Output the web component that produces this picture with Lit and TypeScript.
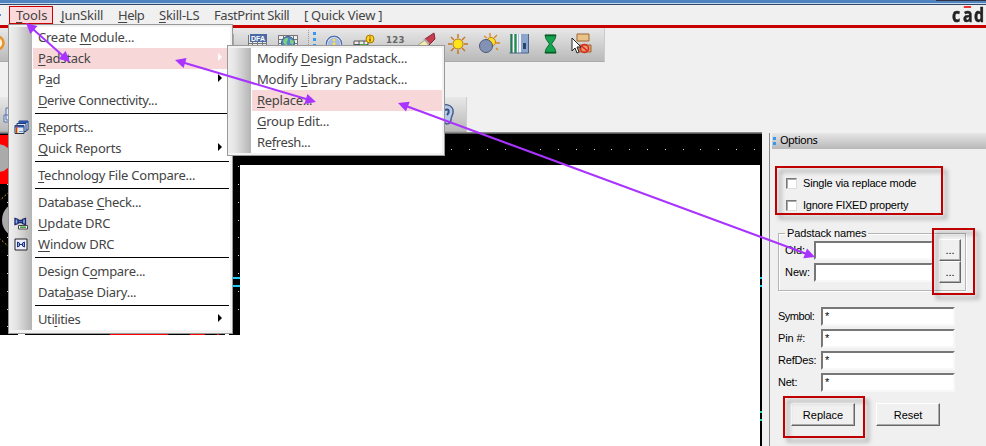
import { LitElement, html, css, svg, nothing } from "lit";
import { customElement, property } from "lit/decorators.js";

type Entry = { t: string; w: number; icon?: string; sub?: boolean; on?: boolean } | null;

// "&" precedes the mnemonic letter.
const label = (t: string) => {
  const i = t.indexOf("&");
  return i < 0 ? t : html`${t.slice(0, i)}<u>${t[i + 1]}</u>${t.slice(i + 2)}`;
};

const toolsMenu: Entry[] = [
  { t: "Create &Module...", w: 96 },
  { t: "&Padstack", w: 52, sub: true, on: true },
  { t: "P&ad", w: 22, sub: true },
  { t: "&Derive Connectivity...", w: 119 },
  null,
  { t: "&Reports...", w: 55, icon: "reports" },
  { t: "&Quick Reports", w: 83, sub: true },
  null,
  { t: "&Technology File Compare...", w: 157 },
  null,
  { t: "Database &Check...", w: 103 },
  { t: "&Update DRC", w: 72, icon: "update" },
  { t: "&Window DRC", w: 76, icon: "window" },
  null,
  { t: "Design C&ompare...", w: 107 },
  { t: "Data&base Diary...", w: 98 },
  null,
  { t: "Uti&lities", w: 42, sub: true },
];
const padMenu: Entry[] = [
  { t: "Modify &Design Padstack...", w: 150 },
  { t: "Modify &Library Padstack...", w: 150 },
  { t: "&Replace...", w: 55, on: true },
  { t: "&Group Edit...", w: 72 },
  { t: "Re&fresh...", w: 53 },
];

// Text run spaced to a fixed width.
@customElement("fit-text")
export class FitText extends LitElement {
  @property() t = "";
  @property({ type: Number }) w = 0;
  static styles = css`
    :host { display: inline-block; white-space: nowrap; }
    u { text-decoration: underline; text-decoration-thickness: 1px; text-underline-offset: 2px; text-decoration-skip-ink: none; }
  `;
  render() {
    return html`<span>${label(this.t)}</span>`;
  }
  updated() {
    const s = this.renderRoot.querySelector("span") as HTMLElement;
    s.style.letterSpacing = "0px";
    const n = this.t.replace("&", "").length;
    s.style.letterSpacing = (this.w + 0.3 - s.getBoundingClientRect().width) / n + "px";
  }
}

const menuIcons: Record<string, unknown> = {
  reports: svg`<path d="M5 1h9v9h-9z" fill="#dcecff" stroke="#223a78"/><path d="M5 2h9" stroke="#2b55b0" stroke-width="2"/><path d="M3 3.500h9v8h-9z" fill="#d5e8ff" stroke="#223a78"/><path d="M1 5.500h9v8h-9z" fill="#d8e8f8" stroke="#334"/><path d="M1 6.500h9" stroke="#2b55b0" stroke-width="2"/><path d="M2.500 6v7" stroke="#d33" stroke-width="1"/><path d="M3.500 8v5" stroke="#e8c83c"/><path d="M5 11.500h5" stroke="#7b9dd0"/>`,
  update: svg`<path d="M1 2.500v6l3-1v-4zM11.500 2.500v6l-3-1v-4zM4 4.500h4.500v2h-4.500z" fill="#7fb0ee" stroke="#20266c" stroke-width="1.300"/><path d="M4.500 9.500h9v3.500h-9z" fill="#fff" stroke="#444"/><path d="M6 11.200h6" stroke="#39a039" stroke-width="1.500"/>`,
  window: svg`<path d="M1 2h12v11h-12z" fill="#eef" stroke="#222"/><path d="M3.500 5v5l2-1v-3zM10.500 5v5l-2-1v-3zM5.500 7.500h3" fill="#8ab4dd" stroke="#20307c"/>`,
};

@customElement("drop-menu")
export class DropMenu extends LitElement {
  @property({ attribute: false }) items: Entry[] = [];
  static styles = css`
    :host { display: block; box-sizing: border-box; border: 1px solid #999; background: #f2f2f2; padding: 2px 2px 2px 0; }
    .body { background: linear-gradient(90deg, #efefef 0, #e4e4e4 7px, #b4b4b4 23px, #fff 23px); }
    .row { display: flex; height: 21px; align-items: center; font: 13px/21px "Noto Sans", sans-serif; color: #444; }
    .ico { width: 24px; height: 21px; display: flex; align-items: center; justify-content: center; }
    .main { flex: 1; display: flex; align-items: center; height: 21px; padding: 0 8px 0 5px; justify-content: space-between; }
    .on .main { background: #f8d7d8; }
    .arrow { width: 0; height: 0; margin-top: -3px; border: 4px solid transparent; border-left-color: #000; border-right: 0; }
    .on .arrow { border-left-color: #fff; }
    .sep { height: 6px; padding: 2px 1px 0 26px; box-sizing: border-box; }
    .line { height: 1px; background: #000; }
  `;
  render() {
    return html`<div class="body">${this.items.map((e) =>
      e
        ? html`<div class="row ${e.on ? "on" : ""}">
            <div class="ico">${e.icon ? html`<svg width="15" height="15" viewBox="0 0 15 15">${menuIcons[e.icon]}</svg>` : nothing}</div>
            <div class="main"><fit-text .t=${e.t} .w=${e.w}></fit-text>${e.sub ? html`<span class="arrow"></span>` : nothing}</div>
          </div>`
        : html`<div class="sep"><div class="line"></div></div>`
    )}</div>`;
  }
}

@customElement("options-panel")
export class OptionsPanel extends LitElement {
  static styles = css`
    :host { display: block; box-sizing: border-box; border-left: 1px solid #888; background: #f0f0f0; color: #000; font: 11px/14px "Liberation Sans", sans-serif; padding-left: 2px; }
    .head { height: 16px; display: flex; align-items: center; gap: 4px; padding-left: 1px; background: linear-gradient(#e6e6e6, #b8b8b8); }
    .grip { width: 3px; height: 8px; background: linear-gradient(#3399f5 3px, transparent 3px 5px, #3399f5 5px); }
    .title { font: 11px/14px "Noto Sans", sans-serif; margin-top: -3px; }
    .checks { margin: 23px 0 0 14px; display: grid; }
    .check { display: flex; align-items: center; gap: 6px; height: 22px; }
    .box { width: 9px; height: 9px; background: #fff; border: 1px solid; border-color: #777 #ddd #ddd #777; box-shadow: inset 1px 1px #aaa; }
    fieldset { border: 1px solid #b5b5b5; box-shadow: 1px 1px #fff, inset 1px 1px #fff; margin: 10px 0 0 6px; padding: 0 5px 0 6px; width: 188px; height: 65px; box-sizing: border-box; min-width: 0; }
    legend { padding: 0 2px; height: 14px; }
    .name { display: grid; grid-template-columns: 29px 125px 22px; align-items: center; height: 22px; }
    .name .in { width: 119px; }
    .names { margin-top: -1px; }
    .in { height: 19px; box-sizing: border-box; background: #fff; border: 2px solid; border-color: #777 #f8f8f8 #f8f8f8 #777; padding: 0 0 0 2px; line-height: 14px; }
    .btn { box-sizing: border-box; display: flex; align-items: center; justify-content: center; background: #f0f0f0; border: 1px solid; border-color: #fff #666 #666 #fff; box-shadow: inset -1px -1px #aaa; }
    .name .btn { height: 22px; }
    .fields { margin: 14px 0 0 6px; display: grid; grid-template-columns: 43px 134px; grid-auto-rows: 22px; align-items: center; }
    .actions { display: flex; gap: 21px; margin: 10px 0 0 19px; }
    .actions .btn { width: 64px; height: 23px; }
  `;
  render() {
    return html`
      <div class="head"><span class="grip"></span><fit-text class="title" t="Options" w="37"></fit-text></div>
      <div class="checks">
        <div class="check"><span class="box"></span><fit-text t="Single via replace mode" w="113"></fit-text></div>
        <div class="check"><span class="box"></span><fit-text t="Ignore FIXED property" w="105"></fit-text></div>
      </div>
      <fieldset>
        <legend><fit-text t="Padstack names" w="79"></fit-text></legend>
        <div class="names">
          ${["Old:", "New:"].map((l) => html`<div class="name"><span>${l}</span><div class="in"></div><div class="btn">...</div></div>`)}
        </div>
      </fieldset>
      <div class="fields">
        ${([["Symbol:", 36], ["Pin #:", 27], ["RefDes:", 38], ["Net:", 19]] as [string, number][]).map(
          ([l, w]) => html`<fit-text .t=${l} .w=${w}></fit-text><div class="in">*</div>`
        )}
      </div>
      <div class="actions">
        <div class="btn"><fit-text t="Replace" w="40"></fit-text></div>
        <div class="btn"><fit-text t="Reset" w="28"></fit-text></div>
      </div>`;
  }
}

// 24x24 toolbar glyphs.
const glyphs: Record<string, unknown> = {
  board: svg`<path d="M0 3h18v18h-18z" fill="#ddd" stroke="#777"/><path d="M10 3h7v9h-7z" fill="#4268b0"/><path d="M10 13h7v5h-7z" fill="#35b535"/>`,
  dfa: svg`<g transform="translate(0 -2)"><path d="M2 6h18v16h-18z" fill="#e8e8e8"/><path d="M2.500 6v16M6.500 6v16M11.500 6v16M16.500 6v16M20.500 6v16M2 14.500h18M2 17.500h18" stroke="#777"/><path d="M4 5h17v8h-17z" fill="#4a69a5"/><text x="5" y="12" font-size="7" font-weight="bold" font-family="Liberation Sans" fill="#fff">DFA</text></g>`,
  globe: svg`<g transform="translate(-1 -2)"><path d="M2 6h19v16h-19z" fill="#eee"/><path d="M2.500 6v16M7.500 6v16M12.500 6v16M17.500 6v16M21.500 6v16M2 6.500h20M2 10.500h20M2 14.500h20" stroke="#777"/><circle cx="12" cy="14" r="6.500" fill="#5389c4" stroke="#345a8a"/><path d="M7 12c2-4 5-4 5-2s-2 3-1 5-3 2-4-3M14 10l4 2-1 4-3-2z" fill="#7ed07e"/></g>`,
  info: svg`<g transform="translate(1 -2)"><circle cx="12" cy="15" r="7.700" fill="#a9bce2" stroke="#f2f4fa" stroke-width="3"/><circle cx="12" cy="15" r="7.700" fill="none" stroke="#5670a8" stroke-width="1.500"/><path d="M12 10v2M12 13.500v5" stroke="#ffe330" stroke-width="2.500"/></g>`,
  gridinfo: svg`<g transform="translate(0 -2)"><path d="M2 12h14v9h-14z" fill="#eee" stroke="#555"/><path d="M2 15.500h14M7 12v9M12 12v9" stroke="#555"/><path d="M8 15h7v3h-7z" fill="#48a848"/><circle cx="18" cy="10" r="4" fill="#ffd326" stroke="#a87800"/><path d="M18 7.500v1M18 9.500v3" stroke="#6d4a00" stroke-width="1.300"/></g>`,
  num: svg`<text x="3" y="12" font-size="9.500" letter-spacing=".3" font-weight="bold" font-family="DejaVu Sans Condensed" fill="#666">123</text>`,
  brush: svg`<g transform="translate(0 -2)"><path d="M20 4l-9 6 4 6 6-6z" fill="#c33d4e" stroke="#8c2636"/><path d="M3 17l8-6 4 4-5 4-8-1z" fill="#f5edb0" stroke="#a5a078"/><path d="M10 10l5 5" stroke="#aaa" stroke-width="2"/></g>`,
  sun: svg`<path d="M12 3v4M12 19v4M2 13h4M18 13h4M5 6l3 3M16 17l3 3M19 6l-3 3M8 17l-3 3" transform="translate(1 0)" stroke="#c4751a" stroke-width="1.400"/><circle cx="13" cy="13" r="5" fill="#ffe319" stroke="#bb7814"/>`,
  moon: svg`<path d="M14 2v4M21 4l-3 3M20 12h4M8 5l3 2M20 17l2 2" stroke="#d8861c" stroke-width="1.300"/><circle cx="15" cy="11" r="4.500" fill="#ffdf22" stroke="#c87d14"/><circle cx="10" cy="15" r="6.500" fill="#8392b4" stroke="#4c587b"/>`,
  bars: svg`<path d="M3 3h19v19h-19z" fill="#8da5ca"/><path d="M4.500 3v19" stroke="#267a4a" stroke-width="2"/><path d="M6.500 3v19M10.500 3v19" stroke="#fff" stroke-width="1.500"/><path d="M8.500 3v19" stroke="#1b963f" stroke-width="2"/><path d="M13 3v19" stroke="#eef" stroke-width="2"/><path d="M21.500 3v19h-19" fill="none" stroke="#4c6287"/><path d="M16 12h3v6h-3z" fill="#26456f"/>`,
  hour: svg`<path d="M7 4h11l-1 4-3.500 5 3.500 5 1 4h-11l1-4 3.500-5-3.500-5z" fill="#16a34f" stroke="#0c6f31"/><path d="M7 4.500h11M7 21.500h11" stroke="#0a5d28" stroke-width="1.500"/>`,
  select: svg`<path d="M8 3h12v7h-12z" fill="#eac38b" stroke="#9e6633"/><path d="M10 14h12v7h-12z" fill="#e19b68" stroke="#9e6633"/><circle cx="15.500" cy="17.500" r="4" fill="none" stroke="#e32222" stroke-width="1.500"/><path d="M12.500 15l6 5" stroke="#e32222" stroke-width="1.500"/><path d="M3 7v13l3-3 2 5 2-1-2-5h4z" fill="#fff" stroke="#222"/>`,
};

const menus: [string, number][] = [
  ["&Tools", 31], ["&JunSkill", 42], ["&Help", 26], ["&Skill-LS", 40], ["FastPrint Skill", 75], ["[ Quick View ]", 78],
];

const arrows = [
  [26, 23, 70, 62],
  [175, 60, 316, 102],
  [398, 103, 815, 257],
];
const head = (x: number, y: number, a: number) =>
  svg`<path d="M0 0L-10.500 -5.300V5.300Z" transform="translate(${x} ${y}) rotate(${a})"/>`;

// Grid points of the board that show beside the menus.
const points = [
  ...Array.from({ length: 18 }, (_, i) => [Math.floor(451.7 + i * 17.8), 149]),
  ...Array.from({ length: 9 }, (_, i) => [7, Math.floor(184.500 + i * 17.8)]),
  ...Array.from({ length: 9 }, (_, i) => [238, Math.floor(166.700 + i * 17.8)]),
];

@customElement("app-root")
export class AppRoot extends LitElement {
  static styles = css`
    :host { display: grid; grid-template-rows: 5px 20px 3px 105px 313px; position: relative; width: 986px; height: 446px; overflow: hidden; background: #f0f0f0; }
    .strip { background: linear-gradient(#4e83bf 3px, #c4daf0 3px 4px, #334767 4px); display: flex; justify-content: flex-end; }
    .tab { width: 50px; height: 1px; background: #334; }
    .bar { display: flex; align-items: center; font: 13px/18px "Noto Sans", sans-serif; color: #444; }
    .prev { width: 1px; height: 2px; margin-right: 8px; background: #4a90e0; }
    .m { box-sizing: border-box; height: 18px; line-height: 18px; margin-right: 14.700px; }
    .m.open { width: 44px; padding-left: 6px; margin-right: 8px; border: 1px solid #c00; background: #fbd9da; line-height: 16px; }
    .m.open fit-text { vertical-align: top; }
    .brand { margin-left: auto; font: bold 20px/20px "Open Sans", sans-serif; color: #222; width: 34px; height: 20px; display: grid; grid-template-columns: 11px 11px 11px; -webkit-text-stroke: .5px #222; }
    .brand span { display: block; width: 11px; transform: scaleX(.8); transform-origin: 0 0; }
    .a { background: linear-gradient(#e33, #e33) 1px 1px / 9px 2px no-repeat; }
    .red { background: #c80000; }
    .tools { display: grid; grid-template-rows: 34px 35px 35px 1px; }
    .dock { box-sizing: border-box; background: linear-gradient(#e8e8e8, #b9b9b9); border-right: 1px solid #ccc; border-bottom: 1px solid #aaa; display: flex; }
    .d1 { width: 605px; padding: 3px 0 0 0; }
    .d2 { width: 467px; grid-row: 3; justify-content: space-between; align-items: center; padding-right: 9px; }
    .edge { grid-row: 4; width: 762px; background: #888; }
    .d1 svg { margin-right: 7px; flex: none; }
    .d1 .first { margin-right: 208px; }
    .d1 .grip { width: 3px; height: 22px; margin: 1px 5px 0 -1px; background: repeating-linear-gradient(#3399f5 0 3px, transparent 3px 6px); }
    .d1 .dotted { width: 1px; height: 30px; margin-right: 5px; margin-top: -1px; background: repeating-linear-gradient(#999 0 1px, transparent 1px 2px); }
    .work { display: grid; grid-template-columns: 763px 6px 217px; }
    .canvas { display: block; }
    .over { position: absolute; }
    .menu1 { left: 8px; top: 24px; width: 225px; height: 310px; }
    .menu2 { left: 227px; top: 45px; width: 218px; height: 111px; }
    .mark { box-sizing: border-box; border: 2px solid #c00000; filter: drop-shadow(4px 4px 2px rgba(0,0,0,.35)); }
    .k1 { left: 775px; top: 166px; width: 168px; height: 49px; }
    .k2 { left: 932px; top: 228px; width: 43px; height: 67px; }
    .k3 { left: 783px; top: 396px; width: 82px; height: 42px; }
    .arrows { left: 0; top: 0; fill: #a933ff; stroke: none; }
    .arrows line { stroke: #a933ff; stroke-width: 2; }
  `;
  render() {
    const g = (n: string) => html`<svg width="24" height="24" viewBox="0 0 24 24">${glyphs[n]}</svg>`;
    return html`
      <div class="strip"><div class="tab"></div></div>
      <div class="bar">
        <div class="prev"></div>
        ${menus.map(([t, w], i) => html`<div class="m ${i === 0 ? "open" : ""}"><fit-text .t=${t} .w=${w}></fit-text></div>`)}
        <div class="brand"><span>c</span><span class="a">a</span><span>d</span></div>
      </div>
      <div class="red"></div>
      <div class="tools">
        <div class="dock d1">
          <svg class="first" width="7" height="24" viewBox="0 0 7 24"><circle cx="-3" cy="12" r="6.500" fill="#fff0d8" stroke="#e8922c" stroke-width="2.500"/></svg>
          ${["board", "dfa", "globe"].map(g)}<span class="dotted"></span><span class="grip"></span>
          ${["info", "gridinfo", "num", "brush", "sun", "moon", "bars", "hour", "select"].map(g)}
        </div>
        <div class="dock d2">
          <svg width="9" height="24" viewBox="0 0 9 24"><path d="M6 6h4v12h-4zM4 13h5v7h-5z" fill="#dfe8f6" stroke="#5873a8"/></svg>
          <svg width="22" height="24" viewBox="0 0 22 24"><path d="M5 3c9-2 14 2 13 8-1 4-2 4-2 7-1 5-6 5-7 1z" fill="#b7c9e8" stroke="#4a5f8c" stroke-width="1.500"/><path d="M10 8c4-2 5 2 2 5" fill="none" stroke="#334f83" stroke-width="2"/></svg>
        </div>
        <div class="edge"></div>
      </div>
      <div class="work">
        <svg class="canvas" width="763" height="313" viewBox="0 133 763 313">
          <rect y="133" width="762" height="313" fill="#000"/>
          <rect y="133" width="762" height="1" fill="#555"/>
          ${points.map(([x, y]) => svg`<rect x=${x} y=${y} width="1" height="1" fill="#ddd"/>`)}
          <rect y="135" width="9" height="49" fill="#f00"/>
          <circle cx="-2" cy="158" r="14" fill="#aaa"/><circle cx="20" cy="220" r="18" fill="#aaa"/>
          <path d="M9 192L-3 203V236L9 247" fill="none" stroke="#e0a020" stroke-dasharray="2 2"/>
          <path d="M233 278h8M233 286h8M760 278h2M760 286h2" stroke="#16cfff" stroke-width="2"/>
          <path d="M110 334h58M190 334h15M217 334h2" stroke="#f00" stroke-width="2"/>
          <path d="M18 334h7M225 334h4" stroke="#fff" stroke-width="2"/>
          <path d="M240 165H760V446H0V335H240Z" fill="#fff"/>
          <path d="M760 412h2M760 420h2" stroke="#1fe0a0" stroke-width="2"/>
        </svg>
        <div></div>
        <options-panel></options-panel>
      </div>
      <drop-menu class="over menu1" .items=${toolsMenu}></drop-menu>
      <drop-menu class="over menu2" .items=${padMenu}></drop-menu>
      <div class="over mark k1"></div><div class="over mark k2"></div><div class="over mark k3"></div>
      <svg class="over arrows" width="986" height="446">
        ${arrows.map(([x1, y1, x2, y2]) => {
          const a = (Math.atan2(y2 - y1, x2 - x1) * 180) / Math.PI;
          const dx = Math.cos((a * Math.PI) / 180) * 5;
          const dy = Math.sin((a * Math.PI) / 180) * 5;
          return svg`<line x1=${x1 + dx} y1=${y1 + dy} x2=${x2 - dx} y2=${y2 - dy}></line>${head(x2, y2, a)}${head(x1, y1, a + 180)}`;
        })}
      </svg>`;
  }
}
